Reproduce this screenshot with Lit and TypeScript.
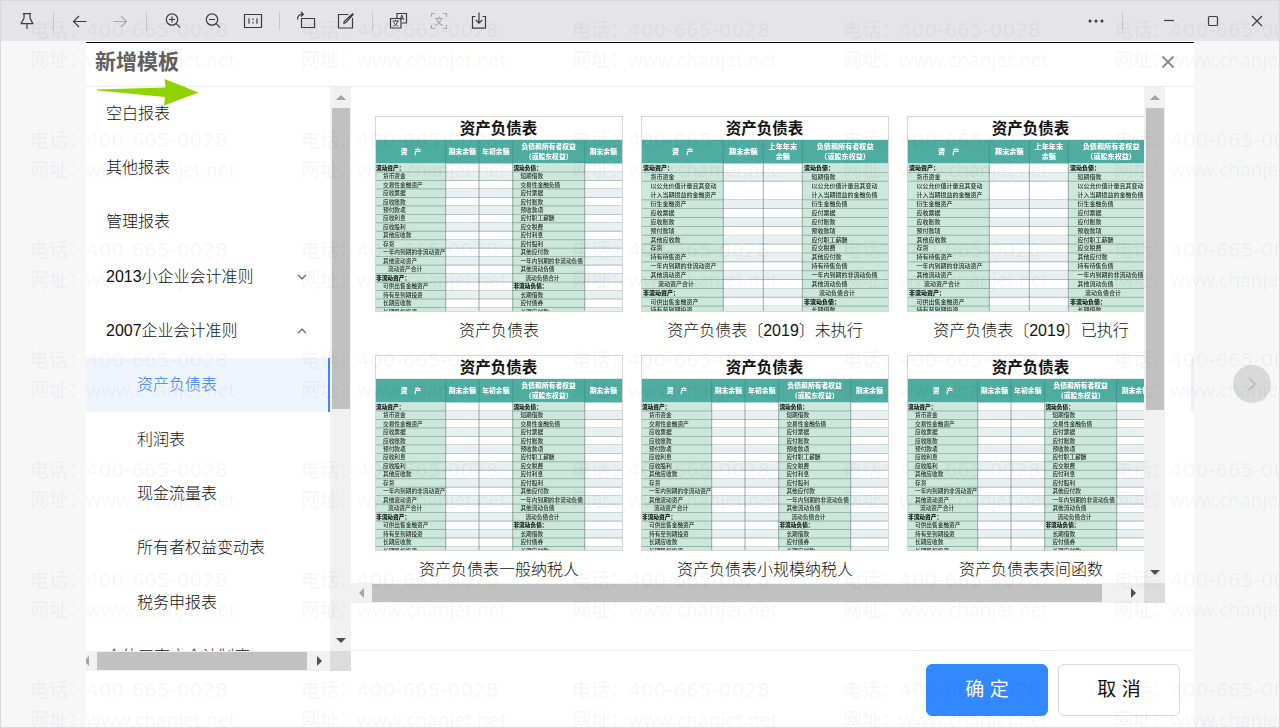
import { LitElement, html, css, svg, nothing } from "lit";
import { customElement, property, state } from "lit/decorators.js";
import { classMap } from "lit/directives/class-map.js";

type Row = { l: string[]; r: string[]; lk?: string; rk?: string };
const row = (l: string, r: string, lk = "", rk = ""): Row => ({ l: l.split("/"), r: r.split("/"), lk, rk });

const CLASSIC: Row[] = [
  row("流动资产：", "流动负债：", "b", "b"),
  row("货币资金", "短期借款"),
  row("交易性金融资产", "交易性金融负债"),
  row("应收票据", "应付票据"),
  row("应收账款", "应付账款"),
  row("预付款项", "预收款项"),
  row("应收利息", "应付职工薪酬"),
  row("应收股利", "应交税费"),
  row("其他应收款", "应付利息"),
  row("存货", "应付股利"),
  row("一年内到期的非流动资产", "其他应付款"),
  row("其他流动资产", "一年内到期的非流动负债"),
  row("流动资产合计", "其他流动负债", "d"),
  row("非流动资产：", "流动负债合计", "b", "d"),
  row("可供出售金融资产", "非流动负债：", "", "b"),
  row("持有至到期投资", "长期借款"),
  row("长期应收款", "应付债券"),
  row("长期股权投资", "长期应付款"),
];

const REVISED: Row[] = [
  row("流动资产：", "流动负债：", "b", "b"),
  row("货币资金", "短期借款"),
  row("以公允价值计量且其变动/计入当期损益的金融资产", "以公允价值计量且其变动/计入当期损益的金融负债"),
  row("衍生金融资产", "衍生金融负债"),
  row("应收票据", "应付票据"),
  row("应收账款", "应付账款"),
  row("预付款项", "预收款项"),
  row("其他应收款", "应付职工薪酬"),
  row("存货", "应交税费"),
  row("持有待售资产", "其他应付款"),
  row("一年内到期的非流动资产", "持有待售负债"),
  row("其他流动资产", "一年内到期的非流动负债"),
  row("流动资产合计", "其他流动负债", "d"),
  row("非流动资产：", "流动负债合计", "b", "d"),
  row("可供出售金融资产", "非流动负债：", "", "b"),
  row("持有至到期投资", "长期借款"),
];

const SHEETS = {
  classic: {
    rows: CLASSIC,
    cols: [1, 70.7, 104, 137.7, 209.7, 247],
    pitch: 8.47,
    size: 5.7,
    head: 6.8,
    heads: [["资　产"], ["期末余额"], ["年初余额"], ["负债和所有者权益", "（或股东权益）"], ["期末余额"]],
    indent: { b: 0, "": 7, d: 12 } as Record<string, number>,
  },
  revised: {
    rows: REVISED,
    cols: [1, 82.3, 122.3, 161.3, 247],
    pitch: 8.86,
    size: 6,
    head: 7.1,
    heads: [["资　产"], ["期末余额"], ["上年年末", "余额"], ["负债和所有者权益", "（或股东权益）"]],
    indent: { b: 1, "": 8.5, d: 16 } as Record<string, number>,
  },
};

@customElement("sheet-preview")
export class SheetPreview extends LitElement {
  @property() kind: "classic" | "revised" = "classic";

  static styles = css`
    :host { display: block; }
    svg { display: block; width: 100%; font-family: "Noto Sans CJK SC", sans-serif; }
    .title { font-size: 15.5px; font-weight: 700; fill: #111; text-anchor: middle; }
    .head { fill: #fff; font-weight: 900; text-anchor: middle; }
    .cells { fill: #1c2a25; font-weight: 500; }
    .bold { font-weight: 900; fill: #0c1512; }
    .soft { filter: blur(0.4px); }
  `;

  render() {
    const s = SHEETS[this.kind];
    const top = 47.5;
    const c = s.cols;
    let y = top;
    const lines = s.rows.map((r, i) => {
      const h = r.l.length > 1 ? s.pitch * 2.1 : s.pitch;
      const y0 = y;
      y += h;
      const step = h / r.l.length;
      const texts = (list: string[], x: number, k = "") =>
        list.map(
          (t, n) => svg`<text class=${k === "b" ? "bold" : ""} x=${x + s.indent[k]} y=${y0 + step * (n + 0.5) + 1.9}>${t}</text>`,
        );
      return svg`
        ${i % 2 ? svg`<rect x=${c[1]} y=${y0} width=${c[3] - c[1]} height=${h} fill="#e9f0f2"/>` : nothing}
        ${i % 2 && c[5] ? svg`<rect x=${c[4]} y=${y0} width=${c[5] - c[4]} height=${h} fill="#e9f0f2"/>` : nothing}
        <path d="M1 ${y}H247" stroke="#5d756d" stroke-width=".6" opacity=".8"/>
        ${texts(r.l, c[0], r.lk)}${texts(r.r, c[3] + 0.7, r.rk)}`;
    });
    return html`<svg viewBox="0 0 248 196" role="img" aria-label="资产负债表">
      <rect width="248" height="196" fill="#fff" />
      <text class="title" x="123.5" y="18">资产负债表</text>
      <rect x="1" y="23.8" width="246" height="23.7" fill="#4eaca0" />
      <rect x="1" y=${top} width=${c[1] - 1} height="149" fill="#cce7db" />
      <rect x=${c[3]} y=${top} width=${c[4] - c[3]} height="149" fill="#cce7db" />
      <g class="cells soft" font-size=${s.size}>${lines}</g>
      ${c.slice(1, -1).map(
        (x) => svg`<path d="M${x} 24V47.5" stroke="#3b8d83" stroke-width=".6"/><path d="M${x} 47.5V196" stroke="#5d756d" stroke-width=".6"/>`,
      )}
      <g class="head soft" font-size=${s.head}>
        ${s.heads.map((h, i) =>
          h.map(
            (t, n) => svg`<text x=${(c[i] + c[i + 1]) / 2} y=${(h.length > 1 ? 31 + n * 9.5 : 35.6) + 2.4}>${t}</text>`,
          ),
        )}
      </g>
      <rect x=".5" y=".5" width="247" height="195" fill="none" stroke="#d6d6d6" />
    </svg>`;
  }
}

const icon = (body: unknown, size = 22) =>
  html`<svg width=${size} height=${size} viewBox="0 0 22 22" fill="none" stroke="currentColor" stroke-width="1.2" aria-hidden="true">${body}</svg>`;

const ICONS = {
  pin: svg`<path d="M7 3.600h8M8 3.600v4.600l-2.900 5.400h11.800L14 8.200V3.600M11 13.600v5.400" stroke-linejoin="round"/>`,
  back: svg`<path d="M17.500 11.500H5M10 6l-5.500 5.500L10 17"/>`,
  forward: svg`<path d="M4.500 11.500H17M12 6l5.500 5.500L12 17"/>`,
  zoomIn: svg`<circle cx="10" cy="9.500" r="5.700"/><path d="M14.200 13.700l4 4M7 9.500h6M10 6.500v6"/>`,
  zoomOut: svg`<circle cx="10" cy="9.500" r="5.700"/><path d="M14.200 13.700l4 4M7 9.500h6"/>`,
  actual: svg`<path d="M2.500 4.500h17v13h-17z"/><path d="M7 8.200v5.600M15 8.200v5.600M11 8.600v1.600M11 12v1.600"/>`,
  rotate: svg`<path d="M6.500 8.500h13v9h-13zM2.500 9.500c0-3.500 2-5.300 5.500-5.300M6 2l2.300 2.200L6 6.500"/>`,
  edit: svg`<path d="M13.500 4.500H3.500v13.500h14V8M8.500 13.500l1-2.500L18 3.500M8.500 13.500l2.500-1L18.500 4"/>`,
  translate: svg`<path d="M9 8.500V3.500h9.500v9.500H14M2.500 8.500H13v9.500H2.500z"/><path d="M12 10l1.800-5 1.800 5M12.600 8.500h2.400M4.500 11h6.500M7.700 9.700V11M5.300 16c2.500-1 4-2.700 4.400-4.800M5.700 12c.8 2 2.300 3.200 4.300 4" stroke-width="1"/>`,
  scan: svg`<path d="M3.500 7V3.500H7M15 3.500h3.500V7M18.500 15v3.500H15M7 18.500H3.500V15M6.800 8.500h8.400M11 6.500v2M7 15.500c3.500-1.200 5.500-3.500 6.200-7M8.600 8.500c.8 3.200 2.800 5.600 6.400 7"/>`,
  download: svg`<path d="M7.500 6.500h-3v11.700h13V6.500h-3M11 2.500v10.500M7.800 10l3.200 3.200L14.200 10"/>`,
  more: svg`<g fill="currentColor" stroke="none"><circle cx="5" cy="11" r="1.500"/><circle cx="11" cy="11" r="1.500"/><circle cx="17" cy="11" r="1.500"/></g>`,
  min: svg`<path d="M6 10.500h10"/>`,
  max: svg`<rect x="6.500" y="6.500" width="9" height="9" rx="1"/>`,
  close: svg`<path d="M6 6l10 10M16 6L6 16"/>`,
};

type Tool = { icon: keyof typeof ICONS; label: string; off?: boolean } | null;
const TOOLS: Tool[] = [
  { icon: "pin", label: "置顶" }, null,
  { icon: "back", label: "上一张" }, { icon: "forward", label: "下一张", off: true }, null,
  { icon: "zoomIn", label: "放大" }, { icon: "zoomOut", label: "缩小" }, { icon: "actual", label: "原始大小" }, null,
  { icon: "rotate", label: "旋转" }, { icon: "edit", label: "编辑" }, null,
  { icon: "translate", label: "翻译" }, { icon: "scan", label: "识别文字", off: true }, { icon: "download", label: "保存" },
];

const MENU = [
  { text: "空白报表" },
  { text: "其他报表" },
  { text: "管理报表" },
  { text: "2013小企业会计准则", fold: "down" },
  { text: "2007企业会计准则", fold: "up" },
  { text: "资产负债表", child: true },
  { text: "利润表", child: true },
  { text: "现金流量表", child: true },
  { text: "所有者权益变动表", child: true },
  { text: "税务申报表", child: true },
  { text: "个体工商户会计制度" },
];

const CARDS = [
  { name: "资产负债表", kind: "classic" },
  { name: "资产负债表〔2019〕未执行", kind: "revised" },
  { name: "资产负债表〔2019〕已执行", kind: "revised" },
  { name: "资产负债表一般纳税人", kind: "classic" },
  { name: "资产负债表小规模纳税人", kind: "classic" },
  { name: "资产负债表表间函数", kind: "classic" },
];

@customElement("app-root")
export class AppRoot extends LitElement {
  @state() private selected = "资产负债表";

  static styles = css`
    :host {
      display: flex; flex-direction: column; position: relative; box-sizing: border-box;
      height: 100vh; overflow: hidden; border: 1px solid #d9d9db; background: #f7f7f7;
      font: 16px/24px "Liberation Sans", "Noto Sans CJK SC", sans-serif; color: #111;
    }
    * { box-sizing: border-box; }
    button { font: inherit; color: inherit; border: 0; background: none; padding: 0; margin: 0; cursor: pointer; }
    svg { display: block; }

    .toolbar { display: flex; align-items: center; height: 40px; flex: none; padding-left: 6px; background: #e5e5e8; color: #3c3c3e; }
    .tool { width: 40px; height: 40px; display: grid; place-items: center; }
    .tool.off { color: #aaaaad; }
    .sep { width: 1px; height: 18px; margin: 0 6px; background: #c8c8cb; }
    .window { display: flex; align-items: center; margin-left: auto; }
    .window .sep { margin-right: 24px; }
    .window .ctl { width: 44px; }

    .stage { flex: 1; min-height: 0; display: flex; position: relative; padding: 1px 85px 0; }
    .dialog { flex: 1; min-width: 0; display: flex; flex-direction: column; position: relative; background: #fff; border-top: 1px solid #000; }
    .header { display: flex; align-items: center; justify-content: space-between; height: 44px; flex: none; padding: 0 16px 6px 9px; border-bottom: 1px solid #ebebeb; }
    .header h1 { margin: 0; font-size: 21px; line-height: 32px; font-weight: 700; color: #606060; }
    .shut { color: #8a8a8a; }
    .pointer { position: absolute; left: 11px; top: 36px; z-index: 1; }
    .body { flex: 1; min-height: 0; display: flex; }

    .pane { display: grid; grid-template-columns: minmax(0, 1fr) 21px; grid-template-rows: minmax(0, 1fr) 20px; }
    .sidebar { width: 265px; flex: none; margin-bottom: 56px; }
    .menu { list-style: none; margin: 0; padding: 0; overflow: hidden; }
    .menu li:nth-child(3n) { margin-bottom: 1px; }
    .item { display: flex; align-items: center; justify-content: space-between; width: 100%; height: 54px; padding: 0 23px 0 20px; text-align: left; white-space: nowrap; font-weight: 300; }
    .item.child { padding-left: 51px; }
    .item.on { background: #eef5ff; color: #2f80f0; border-right: 2px solid #4088f0; }
    .fold { color: #555; }

    .bar { display: flex; align-items: center; background: #f1f1f1; color: #505050; }
    .bar.v { flex-direction: column; }
    .arrow { flex: none; display: grid; place-items: center; width: 21px; height: 21px; }
    .arrow.dim { color: #a3a3a3; }
    .arrow.cut { width: 11px; overflow: hidden; justify-content: end; padding-right: 8px; }
    .track { flex: 1; min-width: 0; min-height: 0; display: flex; }
    .v .track { flex-direction: column; width: 18px; }
    .h .track { height: 18px; }
    .thumb { background: #c1c1c1; }
    .corner { background: #dcdcdc; }

    .main { flex: 1; min-width: 0; display: flex; flex-direction: column; }
    .gallery { flex: 1; min-height: 0; margin: 0 29px 47px 0; }
    .cards { display: grid; grid-template-columns: repeat(3, 248px); gap: 10px 18px; align-content: start; padding: 29px 0 0 24px; overflow: hidden; }
    .card { display: flex; flex-direction: column; gap: 4px; font-weight: 300; }
    .card sheet-preview { width: 248px; }
    .name { line-height: 29px; text-align: center; white-space: nowrap; }

    .footer { display: flex; justify-content: flex-end; gap: 10px; padding: 13px 14px 11px; border-top: 1px solid #ebebeb; }
    .action { width: 122px; height: 52px; border-radius: 6px; font-size: 19px; border: 1px solid #d9d9d9; background: #fff; }
    .action.primary { background: #3388ff; border-color: #3388ff; color: #fff; }

    .next { position: absolute; right: 8px; top: 50%; width: 38px; height: 38px; margin-top: -19px; border-radius: 50%; display: grid; place-items: center; background: #d9d9d9; color: #b4b4b4; }
    .peek { position: absolute; right: 0; top: 315px; width: 3px; height: 54px; background: #eaf2ff; }

    .marks { position: absolute; inset: 0; display: grid; grid-template-columns: repeat(auto-fill, 271px); grid-auto-rows: 110px; padding: 14px 0 0 29px; margin-right: -271px; overflow: hidden; pointer-events: none; z-index: 3; color: rgba(0, 0, 0, 0.05); font: 19px/30px "Noto Sans", "Noto Sans CJK SC", sans-serif; white-space: nowrap; }
    .mark { display: flex; flex-direction: column; }
    .line { display: flex; height: 30px; }
    .line b { width: 56px; font-weight: 500; }
    .tel { font-family: "DejaVu Sans", sans-serif; font-size: 20px; }
  `;

  private tri(dir: "up" | "down" | "left" | "right") {
    const d = { up: "M0 5h10L5 0z", down: "M0 0h10L5 5z", left: "M5 0v10L0 5z", right: "M0 0v10l5-5z" }[dir];
    const tall = dir === "left" || dir === "right";
    return html`<svg width=${tall ? 5 : 10} height=${tall ? 10 : 5} fill="currentColor" aria-hidden="true"><path d=${d} /></svg>`;
  }

  private bar(axis: "v" | "h", share: number, cut = false) {
    const [a, b] = axis === "v" ? (["up", "down"] as const) : (["left", "right"] as const);
    return html`<div class="bar ${axis}">
      <span class=${classMap({ arrow: true, dim: true, cut })}>${this.tri(a)}</span>
      <div class="track"><div class="thumb" style="flex: 0 0 ${share}%"></div></div>
      <span class="arrow">${this.tri(b)}</span>
    </div>`;
  }

  render() {
    return html`
      <div class="toolbar">
        ${TOOLS.map((t) =>
          t
            ? html`<button class=${classMap({ tool: true, off: !!t.off })} aria-label=${t.label} ?disabled=${!!t.off}>${icon(ICONS[t.icon])}</button>`
            : html`<span class="sep"></span>`,
        )}
        <div class="window">
          <button class="tool" aria-label="更多">${icon(ICONS.more)}</button>
          <span class="sep"></span>
          <button class="tool ctl" aria-label="最小化">${icon(ICONS.min)}</button>
          <button class="tool ctl" aria-label="最大化">${icon(ICONS.max)}</button>
          <button class="tool ctl" aria-label="关闭">${icon(ICONS.close)}</button>
        </div>
      </div>
      <div class="stage">
        <section class="dialog" role="dialog" aria-labelledby="title">
          <header class="header">
            <h1 id="title">新增模板</h1>
            <button class="shut" aria-label="关闭窗口">
              <svg width="20" height="20" viewBox="0 0 20 20" fill="none" stroke="currentColor" stroke-width="1.8"><path d="M4.500 4.500l11 11M15.500 4.500l-11 11" /></svg>
            </button>
          </header>
          <svg class="pointer" width="102" height="27" aria-hidden="true"><path d="M0 10.500L68.500 8.500 67.500 0 101.500 13.500 67 26.500 68 18 0 11.500z" fill="#8fd400" /></svg>
          <div class="body">
            <nav class="pane sidebar">
              <ul class="menu">
                ${MENU.map(
                  (m) => html`<li>
                    <button
                      class=${classMap({ item: true, child: !!m.child, on: m.text === this.selected })}
                      @click=${() => (this.selected = m.text)}
                    >
                      <span>${m.text}</span>
                      ${m.fold
                        ? html`<svg class="fold" width="10" height="6" fill="none" stroke="currentColor" stroke-width="1.2"><path d=${m.fold === "down" ? "M1 .8l4 4 4-4" : "M1 5.200l4-4 4 4"} /></svg>`
                        : nothing}
                    </button>
                  </li>`,
                )}
              </ul>
              ${this.bar("v", 57.6)} ${this.bar("h", 99, true)}
              <div class="corner"></div>
            </nav>
            <div class="main">
              <div class="pane gallery">
                <div class="cards">
                  ${CARDS.map(
                    (c) => html`<div class="card">
                      <sheet-preview kind=${c.kind}></sheet-preview>
                      <span class="name">${c.name}</span>
                    </div>`,
                  )}
                </div>
                ${this.bar("v", 66.5)} ${this.bar("h", 97.2)}
                <div class="corner"></div>
              </div>
              <footer class="footer">
                <button class="action primary">确 定</button>
                <button class="action">取 消</button>
              </footer>
            </div>
          </div>
          <span class="peek"></span>
        </section>
        <button class="next" aria-label="下一页">
          <svg width="8" height="14" fill="none" stroke="currentColor" stroke-width="1.300"><path d="M1 1l6 6-6 6" /></svg>
        </button>
      </div>
      <div class="marks" aria-hidden="true">
        ${Array.from(
          { length: 35 },
          () => html`<div class="mark">
            <div class="line"><b>电话：</b><span class="tel">400-665-0028</span></div>
            <div class="line"><b>网址：</b><span>www.chanjet.net</span></div>
          </div>`,
        )}
      </div>
    `;
  }
}
